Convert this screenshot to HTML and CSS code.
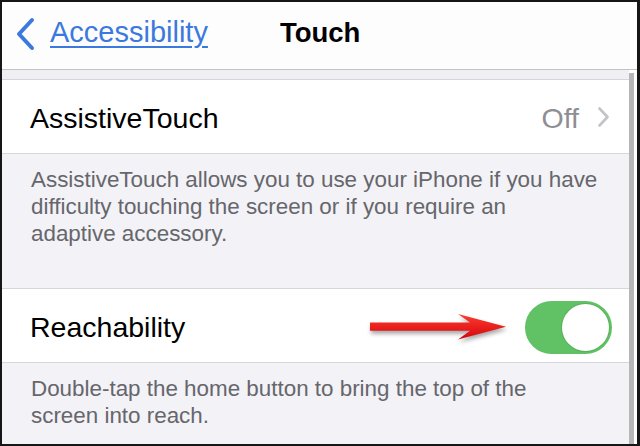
FILE: index.html
```html
<!DOCTYPE html>
<html>
<head>
<meta charset="utf-8">
<link rel="stylesheet" href="styles.css">
</head>
<body>
<div class="frame">
  <div class="nav">
    <svg class="back-chev" width="22" height="34" viewBox="0 0 22 34">
      <path d="M17 3 L4 17 L17 31" fill="none" stroke="#3b79de" stroke-width="4" stroke-linecap="round" stroke-linejoin="round"/>
    </svg>
    <span class="back-label">Accessibility</span>
    <span class="nav-title">Touch</span>
  </div>
  <div class="main">
    <div class="content">
      <div class="band"></div>
      <div class="row">
        <span class="row-title">AssistiveTouch</span>
        <span class="row-value">Off</span>
        <svg class="disclosure" width="13" height="22" viewBox="0 0 13 22">
          <path d="M2.5 2.5 L10.5 11 L2.5 19.5" fill="none" stroke="#c3c3c8" stroke-width="2.6" stroke-linecap="round" stroke-linejoin="round"/>
        </svg>
      </div>
      <div class="desc desc-first">AssistiveTouch allows you to use your iPhone if you have<br>difficulty touching the screen or if you require an<br>adaptive accessory.</div>
      <div class="row">
        <span class="row-title">Reachability</span>
        <svg class="arrow" width="140" height="34" viewBox="0 0 140 34">
          <defs>
            <linearGradient id="ag" x1="0" y1="0" x2="0" y2="1">
              <stop offset="0" stop-color="#ff3b30"/>
              <stop offset="1" stop-color="#d3060c"/>
            </linearGradient>
          </defs>
          <path d="M1 11.5 L101 11.5 L89 3 L137 15.7 L89 28.5 L101 19.8 L1 19.8 Z" fill="url(#ag)"/>
        </svg>
        <div class="toggle"><div class="knob"></div></div>
      </div>
      <div class="desc desc-last">Double-tap the home button to bring the top of the<br>screen into reach.</div>
    </div>
    <div class="rail"><div class="thumb"></div></div>
  </div>
</div>
</body>
</html>
```
FILE: styles.css
```css
html, body {
  margin: 0;
  padding: 0;
  background: #141414;
}
body {
  font-family: "Liberation Sans", Arial, sans-serif;
}
.frame {
  box-sizing: border-box;
  width: 640px;
  height: 446px;
  border: 2px solid #161616;
  border-right-width: 3px;
  background: #fff;
  overflow: hidden;
  display: flex;
  flex-direction: column;
}
.nav {
  flex: none;
  height: 67px;
  border-bottom: 1px solid #c3c3c6;
  background: #fdfdfd;
  display: flex;
  align-items: center;
  padding-left: 13px;
}
.back-chev {
  display: block;
  margin-top: -3px;
}
.back-label {
  margin-left: 13px;
  font-size: 29px;
  color: #3b79de;
  text-decoration: underline;
  text-decoration-thickness: 2px;
  text-underline-offset: 4px;
  margin-top: -6px;
}
.nav-title {
  margin-left: 72px;
  font-size: 27.5px;
  font-weight: bold;
  color: #000;
  margin-top: -6px;
}
.main {
  flex: 1;
  display: flex;
  min-height: 0;
}
.content {
  flex: 1;
  background: #f2f2f7;
  display: flex;
  flex-direction: column;
}
.band {
  height: 9px;
  background: #efeff4;
}
.row {
  height: 73px;
  background: #fff;
  border-top: 1px solid #d6d6da;
  border-bottom: 1px solid #d6d6da;
  display: flex;
  align-items: center;
  padding: 0 17px 0 28px;
}
.row-title {
  font-size: 28.5px;
  color: #000;
  flex: 1;
  margin-top: 3px;
}
.row-value {
  font-size: 28.5px;
  color: #8e8e93;
  margin-right: 18px;
  margin-top: 3px;
}
.disclosure {
  display: block;
  margin-right: 2px;
}
.desc {
  font-size: 22.4px;
  line-height: 27px;
  color: #66666b;
  padding-left: 29px;
  padding-top: 12px;
}
.desc-first {
  height: 122px;
}
.desc-last {
  flex: 1;
}
.arrow {
  display: block;
  margin-right: 16px;
  margin-top: 4px;
  filter: drop-shadow(1px 3px 2px rgba(0, 0, 0, 0.35));
}
.toggle {
  width: 87px;
  height: 53px;
  border-radius: 27px;
  background: #61c265;
  position: relative;
  margin-top: 3px;
}
.knob {
  position: absolute;
  right: 3px;
  top: 3px;
  width: 47px;
  height: 47px;
  border-radius: 50%;
  background: #fff;
  box-shadow: 0 0 0 1px rgba(70, 150, 70, 0.35);
}
.rail {
  width: 8px;
  background: #fff;
}
.thumb {
  width: 5px;
  margin-top: 3px;
  height: 400px;
  background: #b6b6b8;
}
```
